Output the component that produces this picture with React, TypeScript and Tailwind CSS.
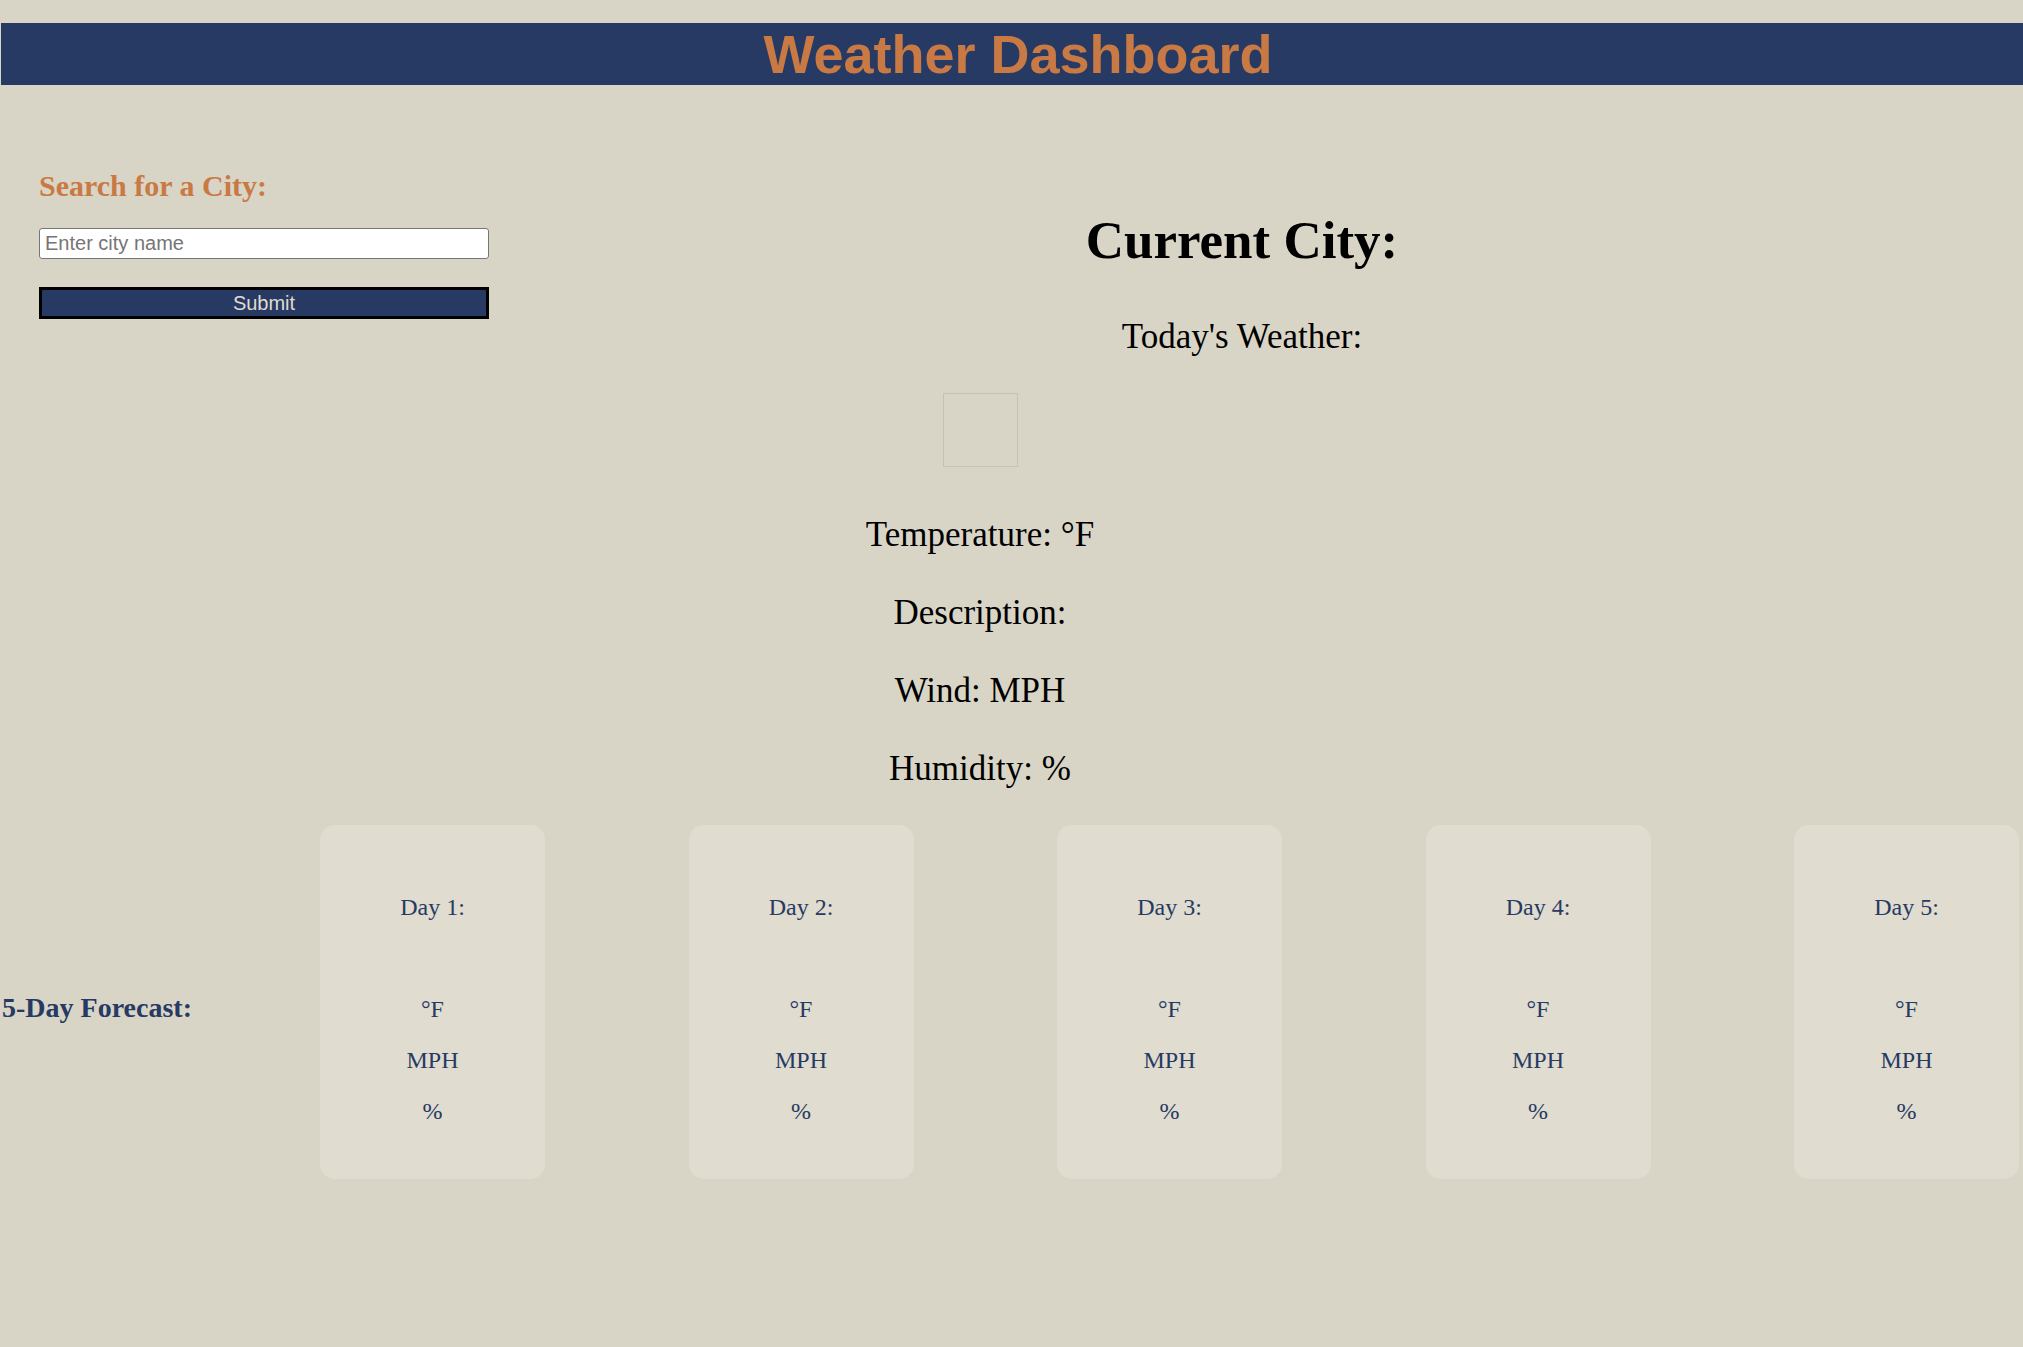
import { useState } from 'react';

const days = [1, 2, 3, 4, 5];

function ForecastCard({ day }: { day: number }) {
    return (
        <div className="w-[225px] shrink-0 rounded-[15px] bg-[#e0dccf] pt-[68px] pb-[54px] text-center text-[24px] leading-[28px] text-[#263a63] flex flex-col gap-[23px]">
            <p>Day {day}:</p>
            <p className="h-[28px]"></p>
            <p>°F</p>
            <p>MPH</p>
            <p>%</p>
        </div>
    );
}

export default function App() {
    const [city, setCity] = useState('');

    return (
        <div className="min-h-[1347px] bg-[#d9d5c6] pt-[23px] font-['Liberation_Serif',serif]">
            <header className="ml-px h-[62px] bg-[#273a64] text-center">
                <h1 className="font-['Liberation_Sans',Arial,sans-serif] text-[54px] font-bold leading-[62px] text-[#c97a44] pl-[12px]">
                    Weather Dashboard
                </h1>
            </header>

            <div className="flex">
                <aside className="w-[461px] shrink-0 pl-[39px] pt-[84px]">
                    <h2 className="text-[30px] font-bold leading-[34px] text-[#c97a44]">Search for a City:</h2>
                    <form
                        className="mt-[25px] flex flex-col w-[450px]"
                        onSubmit={(e) => e.preventDefault()}
                    >
                        <input
                            type="text"
                            value={city}
                            onChange={(e) => setCity(e.target.value)}
                            placeholder="Enter city name"
                            className="h-[31px] rounded-[3px] border border-[#767676] bg-white px-[5px] font-['Liberation_Sans',Arial,sans-serif] text-[20px] text-black placeholder:text-[#757575] outline-none"
                        />
                        <button
                            type="submit"
                            className="mt-[28px] h-[32px] border-[3px] border-black bg-[#273a64] font-['Liberation_Sans',Arial,sans-serif] text-[20px] leading-[22px] text-[#e0dccf]"
                        >
                            Submit
                        </button>
                    </form>
                </aside>

                <section className="grow pt-[125px] text-center text-black">
                    <h2 className="text-[53px] font-bold leading-[60px]">Current City:</h2>
                    <h3 className="mt-[47px] text-[35px] leading-[40px]">Today's Weather:</h3>
                    <div className="w-[1038px] flex flex-col items-center">
                        <div className="mt-[36px] w-[75px] h-[74px] border border-[#c4c1b6]"></div>
                        <div className="mt-[48px] flex flex-col gap-[38px] text-[35px] leading-[40px]">
                            <p>Temperature: °F</p>
                            <p>Description:</p>
                            <p>Wind: MPH</p>
                            <p>Humidity: %</p>
                        </div>
                    </div>
                </section>
            </div>

            <div className="mt-[36px] flex">
                <div className="w-[320px] shrink-0 pl-[2px] pt-[167px]">
                    <h2 className="text-[28px] font-bold leading-[32px] text-[#263a63]">5-Day Forecast:</h2>
                </div>
                <div className="flex gap-[143.5px]">
                    {days.map((d) => (
                        <ForecastCard key={d} day={d} />
                    ))}
                </div>
            </div>
        </div>
    );
}
